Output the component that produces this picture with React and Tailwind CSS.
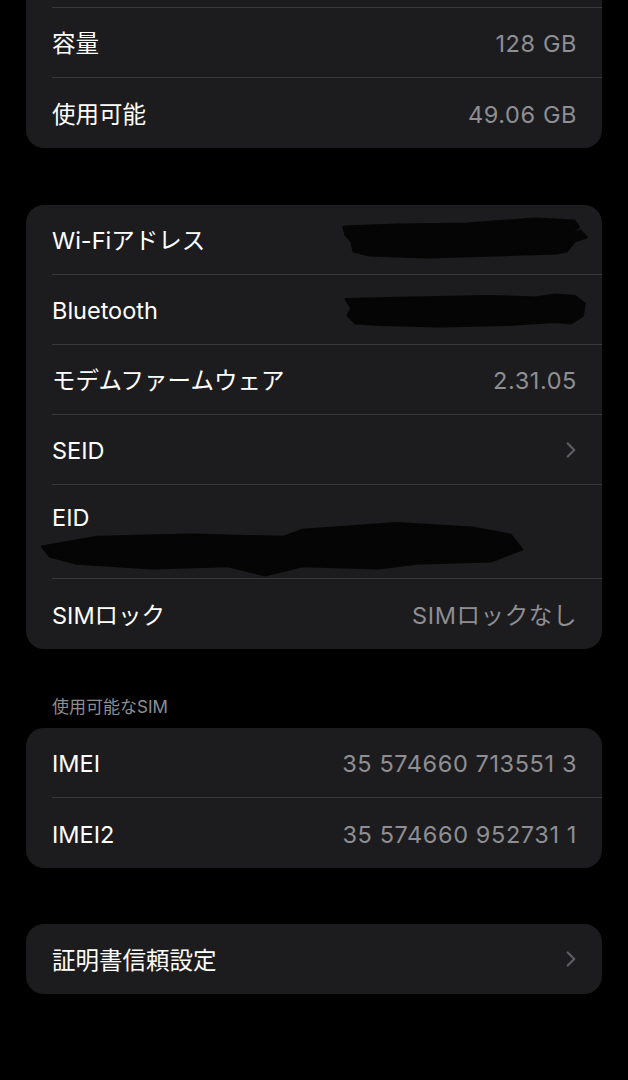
import { FiChevronRight } from 'react-icons/fi';

const font = { fontFamily: 'Inter, "Noto Sans CJK JP", sans-serif' };

function Row({ label, value, chevron, last, children }) {
  return (
    <div className="relative pl-[26px]">
      <div className={`flex items-center h-[70px] pt-[3px] pr-[25px] ${last ? '' : 'border-b border-[#38383a]'}`}>
        <span className="text-[23.5px] text-white">{label}</span>
        <span className="ml-auto text-[23.5px] text-[#8e8e93] tracking-[0.6px]">{value}</span>
        {chevron && <FiChevronRight className="ml-auto w-[26px] h-[26px] text-[#5b5b60] -mr-[7px] -mt-[3px]" strokeWidth={2.2} />}
      </div>
      {children}
    </div>
  );
}

function Scribble({ className, d }) {
  return (
    <svg className={`absolute ${className}`} viewBox="0 0 260 50" preserveAspectRatio="none">
      <path d={d} fill="#050505" stroke="#050505" strokeWidth="3" strokeLinejoin="round" />
    </svg>
  );
}

export default function App() {
  return (
    <div className="min-h-[1080px] bg-black overflow-hidden" style={font}>
      <div className="px-[26px] -mt-[62px]">
        {/* Storage */}
        <div className="bg-[#1c1c1e] rounded-[18px] overflow-hidden">
          <Row label="" value="" />
          <Row label="容量" value="128 GB" />
          <Row label="使用可能" value="49.06 GB" last />
        </div>

        {/* Network */}
        <div className="mt-[57px] bg-[#1c1c1e] rounded-[18px] overflow-hidden">
          <Row label="Wi-Fiアドレス" value="">
            <Scribble
              className="left-[314px] top-[10px] w-[254px] h-[50px]"
              d="M4 12 L60 10 L130 9 L200 4 L240 6 L244 12 L230 20 L246 16 L252 22 L240 26 L232 36 L222 38 L160 40 L90 42 L30 40 L14 36 L12 26 L6 20 Z"
            />
          </Row>
          <Row label="Bluetooth" value="">
            <Scribble
              className="left-[316px] top-[18px] w-[252px] h-[38px]"
              d="M4 8 L70 6 L150 4 L200 6 L220 2 L240 4 L250 14 L248 30 L236 40 L220 38 L170 42 L100 44 L40 42 L14 40 L6 30 L10 20 Z"
            />
          </Row>
          <Row label="モデムファームウェア" value="2.31.05" />
          <Row label="SEID" value="" chevron />
          <div className="relative pl-[26px]">
            <div className="h-[94px] pr-[25px] pt-[15px] border-b border-[#38383a]">
              <span className="text-[23.5px] text-white">EID</span>
            </div>
            <Scribble
              className="left-[14px] top-[34px] w-[488px] h-[58px]"
              d="M2 24 L30 16 L80 14 L130 16 L140 10 L190 4 L230 8 L250 14 L256 26 L240 36 L200 38 L180 42 L140 40 L120 48 L100 40 L60 42 L20 38 L6 32 Z"
            />
          </div>
          <Row label="SIMロック" value="SIMロックなし" last />
        </div>

        {/* SIM */}
        <div className="mt-[47px] pl-[26px] text-[17px] text-[#8e8e93] leading-[22px]">使用可能なSIM</div>
        <div className="mt-[10px] bg-[#1c1c1e] rounded-[18px] overflow-hidden">
          <Row label="IMEI" value="35 574660 713551 3" />
          <Row label="IMEI2" value="35 574660 952731 1" last />
        </div>

        {/* Certificates */}
        <div className="mt-[56px] bg-[#1c1c1e] rounded-[18px] overflow-hidden">
          <Row label="証明書信頼設定" value="" chevron last />
        </div>
      </div>
    </div>
  );
}
